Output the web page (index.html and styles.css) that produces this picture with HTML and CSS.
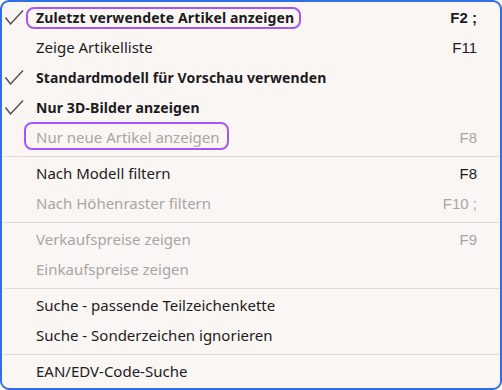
FILE: index.html
```html
<!DOCTYPE html>
<html lang="de">
<head>
    <meta charset="UTF-8">
    <meta name="viewport" content="width=device-width, initial-scale=1.0">
    <title>Ansicht</title>
    <link rel="stylesheet" href="styles.css">
</head>
<body>
    <div class="menu">
        <div class="item bold checked">
            <span class="check"><svg viewBox="0 0 20 16" width="20" height="16"><path d="M1.5 8.5 L6.5 15 L19 1.5" /></svg></span>
            <span class="label">Zuletzt verwendete Artikel anzeigen</span>
            <span class="key">F2 ;</span>
            <span class="hl hl-a"></span>
        </div>
        <div class="item">
            <span class="check"></span>
            <span class="label">Zeige Artikelliste</span>
            <span class="key">F11</span>
        </div>
        <div class="item bold checked">
            <span class="check"><svg viewBox="0 0 20 16" width="20" height="16"><path d="M1.5 8.5 L6.5 15 L19 1.5" /></svg></span>
            <span class="label">Standardmodell für Vorschau verwenden</span>
            <span class="key"></span>
        </div>
        <div class="item bold checked">
            <span class="check"><svg viewBox="0 0 20 16" width="20" height="16"><path d="M1.5 8.5 L6.5 15 L19 1.5" /></svg></span>
            <span class="label">Nur 3D-Bilder anzeigen</span>
            <span class="key"></span>
        </div>
        <div class="item disabled">
            <span class="check"></span>
            <span class="label">Nur neue Artikel anzeigen</span>
            <span class="key">F8</span>
            <span class="hl hl-b"></span>
        </div>

        <div class="sep"></div>

        <div class="item">
            <span class="check"></span>
            <span class="label">Nach Modell filtern</span>
            <span class="key">F8</span>
        </div>
        <div class="item disabled">
            <span class="check"></span>
            <span class="label">Nach Höhenraster filtern</span>
            <span class="key">F10 ;</span>
        </div>

        <div class="sep"></div>

        <div class="item disabled">
            <span class="check"></span>
            <span class="label">Verkaufspreise zeigen</span>
            <span class="key">F9</span>
        </div>
        <div class="item disabled">
            <span class="check"></span>
            <span class="label">Einkaufspreise zeigen</span>
            <span class="key"></span>
        </div>

        <div class="sep"></div>

        <div class="item">
            <span class="check"></span>
            <span class="label">Suche - passende Teilzeichenkette</span>
            <span class="key"></span>
        </div>
        <div class="item">
            <span class="check"></span>
            <span class="label">Suche - Sonderzeichen ignorieren</span>
            <span class="key"></span>
        </div>

        <div class="sep"></div>

        <div class="item">
            <span class="check"></span>
            <span class="label">EAN/EDV-Code-Suche</span>
            <span class="key"></span>
        </div>
    </div>
</body>
</html>
```

FILE: styles.css
```css
html, body {
    margin: 0;
    padding: 0;
    background: #ffffff;
}
body {
    font-family: "Noto Sans", "Open Sans", sans-serif;
    font-size: 15px;
    color: #1d1b22;
}
.menu {
    box-sizing: border-box;
    width: 502px;
    height: 390px;
    background: #faf6f3;
    border: 2px solid #2f6fe3;
    border-radius: 9px;
    padding: 0 1px;
}
.item {
    position: relative;
    display: flex;
    align-items: center;
    height: 30px;
}
.check {
    width: 32px;
    display: flex;
    align-items: center;
    padding-left: 1px;
}
.check svg {
    fill: none;
    stroke: #505050;
    stroke-width: 1.4;
}
.label {
    flex: 1;
    white-space: nowrap;
}
.key {
    font-family: "Liberation Sans", Arial, sans-serif;
    font-size: 15px;
    padding-right: 22px;
}
.bold .label {
    font-size: 14px;
    letter-spacing: 0.12px;
    font-weight: bold;
}
.bold .key {
    font-weight: bold;
}
.disabled {
    color: #a9a5a5;
}
.sep {
    height: 1px;
    margin: 4px 0 1px;
    background: #e6d9d3;
}
/* annotation frames drawn over the labels */
.hl {
    position: absolute;
    box-sizing: border-box;
    border: 2px solid #a855f7;
    border-radius: 8px;
}
.hl-a {
    left: 23px;
    top: 5px;
    width: 275px;
    height: 22px;
}
.hl-b {
    left: 21px;
    top: 0;
    width: 205px;
    height: 28px;
}
```
